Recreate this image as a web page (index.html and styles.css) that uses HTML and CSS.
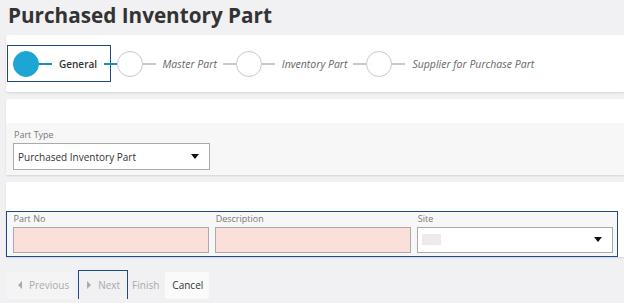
FILE: index.html
```html
<!DOCTYPE html>
<html lang="en">
<head>
    <meta charset="UTF-8">
    <title>Purchased Inventory Part</title>
    <link rel="stylesheet" href="styles.css">
</head>
<body>
    <h1 class="title">Purchased Inventory Part</h1>

    <div class="card steps">
        <div class="step active">
            <span class="dot"></span>
            <span class="line"></span>
            <span class="label">General</span>
        </div>
        <span class="line done"></span>
        <span class="dot"></span>
        <span class="line"></span>
        <span class="label">Master Part</span>
        <span class="line"></span>
        <span class="dot"></span>
        <span class="line"></span>
        <span class="label">Inventory Part</span>
        <span class="line"></span>
        <span class="dot"></span>
        <span class="line"></span>
        <span class="label">Supplier for Purchase Part</span>
    </div>

    <div class="card">
        <div class="card-top"></div>
        <div class="group">
            <div class="field">
                <label>Part Type</label>
                <div class="select tall">Purchased Inventory Part<span class="caret"></span></div>
            </div>
        </div>
    </div>

    <div class="card">
        <div class="card-top short"></div>
        <div class="group focused">
            <div class="field">
                <label>Part No</label>
                <div class="input required"></div>
            </div>
            <div class="field">
                <label>Description</label>
                <div class="input required"></div>
            </div>
            <div class="field">
                <label>Site</label>
                <div class="select"><span class="placeholder"></span><span class="caret"></span></div>
            </div>
        </div>
    </div>

    <div class="buttons">
        <button class="btn disabled prev"><span class="tri left"></span>Previous</button>
        <button class="btn disabled focus"><span class="tri right"></span>Next</button>
        <button class="btn plain disabled">Finish</button>
        <button class="btn light">Cancel</button>
    </div>
</body>
</html>
```

FILE: styles.css
```css
body {
    margin: 0;
    padding: 0 0 0 6px;
    background: #f1f0f2;
    font-family: "Open Sans", Arial, sans-serif;
    color: #333;
    overflow: hidden;
}
.title {
    font-size: 20.7px;
    font-weight: 700;
    color: #333;
    margin: 0;
    padding: 0 0 0 2px;
    height: 35px;
    line-height: 30px;
}
.card {
    background: #fff;
    margin-bottom: 7px;
    box-shadow: 0 1px 2px rgba(0,0,0,0.12);
    border-radius: 2px 0 0 2px;
}
.steps {
    height: 57px;
    display: flex;
    align-items: center;
    padding-left: 1px;
    font-size: 10.5px;
}
.step {
    display: flex;
    align-items: center;
}
.step.active {
    border: 1.5px solid #1d4a86;
    height: 35px;
    padding: 0 6px 0 5px;
}
.dot {
    width: 24px;
    height: 24px;
    border: 1px solid #c8c8c8;
    border-radius: 50%;
    background: #fff;
    flex: none;
}
.step.active .dot {
    background: #1da5d3;
    border-color: #1da5d3;
}
.line {
    width: 13px;
    height: 2px;
    background: #c8c8c8;
    flex: none;
}
.step.active .line,
.line.done {
    background: #1a8fc1;
}
.line.done {
    margin-left: -7.5px;
}
.label {
    color: #666;
    font-style: italic;
    padding: 0 6px 0 7px;
    white-space: nowrap;
}
.step.active .label {
    font-style: normal;
    font-weight: 600;
    font-size: 10px;
    color: #333;
    padding: 0 7px 0 7px;
}
.card-top {
    height: 24px;
}
.card-top.short {
    height: 29px;
}
.group {
    background: #f7f7f7;
    display: flex;
    gap: 6px;
    padding: 5px 7px 5px 7px;
}
.group.focused {
    border: 1.5px solid #1d4a86;
    margin-right: 6px;
    padding: 0 4px 3px 5.5px;
}
.field {
    width: 196.5px;
    display: flex;
    flex-direction: column;
}
.field label {
    font-size: 9px;
    color: #777;
    height: 14.5px;
    line-height: 14px;
    padding-left: 1px;
}
.group:not(.focused) .field label {
    height: 15px;
}
.input, .select {
    height: 26px;
    box-sizing: border-box;
    border: 1px solid #aaa;
    background: #fff;
}
.select.tall {
    height: 27px;
}
.input.required {
    background: #fadfdb;
}
.select {
    display: flex;
    align-items: center;
    padding: 0 10px 0 4px;
    font-size: 10px;
    color: #333;
}
.caret {
    margin-left: auto;
    width: 0;
    height: 0;
    border-left: 4px solid transparent;
    border-right: 4px solid transparent;
    border-top: 5px solid #111;
}
.placeholder {
    width: 19px;
    height: 11px;
    background: #efe9ea;
}
.buttons {
    display: flex;
    align-items: center;
    gap: 3px;
    margin-top: 15px;
}
.btn {
    font-family: "Open Sans", Arial, sans-serif;
    font-size: 10px;
    height: 27px;
    border: none;
    border-radius: 3px;
    background: #f4f4f5;
    color: #333;
    padding: 0 7px;
    display: flex;
    align-items: center;
}
.btn.prev {
    padding: 0 5px 0 12px;
}
.btn.disabled {
    color: #aaa;
}
.btn.focus {
    outline: 1.5px solid #1d4a86;
    outline-offset: 1.5px;
    border-radius: 0;
    background: #f1f0f2;
    margin: 0 3px;
    padding: 0 6px 0 7px;
}
.btn.plain {
    background: transparent;
    padding: 0;
    margin-right: 3px;
}
.btn.light {
    background: #fafafa;
    padding: 0 6px 0 7px;
}
.tri {
    width: 0;
    height: 0;
    border-top: 4px solid transparent;
    border-bottom: 4px solid transparent;
    margin-right: 7px;
}
.tri.left {
    border-right: 4px solid #aaa;
}
.tri.right {
    border-left: 4px solid #aaa;
}
```
